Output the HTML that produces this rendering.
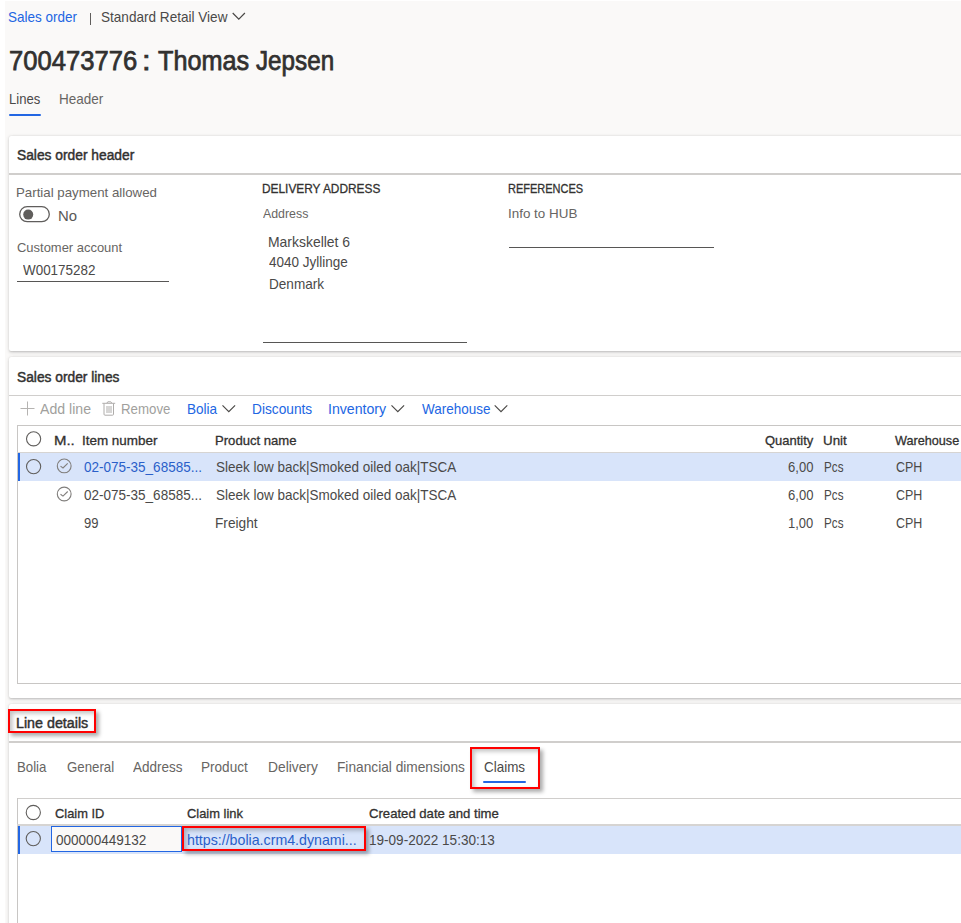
<!DOCTYPE html>
<html><head><meta charset="utf-8"><title>Sales order</title>
<style>
html,body{margin:0;padding:0;background:#fff;}
body{width:961px;height:923px;overflow:hidden;position:relative;font-family:"Liberation Sans",sans-serif;}
.t{position:absolute;white-space:nowrap;transform-origin:0 0;}
</style></head><body>
<div style="position:absolute;left:5px;top:1px;width:956px;height:922px;background:#faf9f8;"></div><div style="position:absolute;left:9px;top:136px;width:970px;height:215px;background:#fff;border-radius:2px;box-shadow:0 1.6px 3.6px rgba(0,0,0,.11),0 0.3px 1.5px rgba(0,0,0,.10),0 0 4px rgba(0,0,0,.05);"></div><div style="position:absolute;left:9px;top:357px;width:970px;height:340.5px;background:#fff;border-radius:2px;box-shadow:0 1.6px 3.6px rgba(0,0,0,.11),0 0.3px 1.5px rgba(0,0,0,.10),0 0 4px rgba(0,0,0,.05);"></div><div style="position:absolute;left:9px;top:704px;width:970px;height:260px;background:#fff;border-radius:2px;box-shadow:0 1.6px 3.6px rgba(0,0,0,.11),0 0.3px 1.5px rgba(0,0,0,.10),0 0 4px rgba(0,0,0,.05);"></div><div style="position:absolute;left:9px;top:173.2px;width:953px;height:1.5px;background:#d0cecc;"></div><div style="position:absolute;left:9px;top:394.6px;width:953px;height:1.5px;background:#d0cecc;"></div><div style="position:absolute;left:9px;top:741.0px;width:953px;height:1.5px;background:#d0cecc;"></div><div style="position:absolute;left:90px;top:13px;width:1px;height:12px;background:#605e5c;"></div><div style="position:absolute;left:9px;top:113.5px;width:32px;height:2px;background:#2266e3;border-radius:1px;"></div><div style="position:absolute;left:17px;top:281px;width:152px;height:1px;background:#575655;"></div><div style="position:absolute;left:263px;top:342px;width:204px;height:1px;background:#575655;"></div><div style="position:absolute;left:509px;top:247px;width:205px;height:1px;background:#575655;"></div><div style="position:absolute;left:17px;top:425px;width:944px;height:1px;background:#c8c6c4;"></div><div style="position:absolute;left:17px;top:425px;width:1px;height:258px;background:#c8c6c4;"></div><div style="position:absolute;left:17px;top:683px;width:944px;height:1px;background:#c8c6c4;"></div><div style="position:absolute;left:18px;top:453px;width:943px;height:28px;background:#d8e4fa;"></div><div style="position:absolute;left:17px;top:451.9px;width:944px;height:1.2px;background:#d6d4d2;"></div><div style="position:absolute;left:18px;top:453px;width:2px;height:28px;background:#2266e3;"></div><div style="position:absolute;left:8.2px;top:709.3px;width:87.8px;height:23.4px;border:2.8px solid #ff0000;box-sizing:border-box;box-shadow:3px 3px 4px rgba(0,0,0,.33), inset 2.5px 2.5px 4px rgba(0,0,0,.24);"></div><div style="position:absolute;left:483px;top:781px;width:43px;height:2px;background:#2266e3;border-radius:1px;"></div><div style="position:absolute;left:470.2px;top:747px;width:70px;height:42px;border:2.8px solid #ff0000;box-sizing:border-box;box-shadow:3px 3px 4px rgba(0,0,0,.33), inset 2.5px 2.5px 4px rgba(0,0,0,.24);"></div><div style="position:absolute;left:17px;top:797.6px;width:944px;height:1.1px;background:#d0cecc;"></div><div style="position:absolute;left:17px;top:797.5px;width:1px;height:130px;background:#c8c6c4;"></div><div style="position:absolute;left:18px;top:825.6px;width:943px;height:28.2px;background:#d8e4fa;"></div><div style="position:absolute;left:17px;top:824.4px;width:944px;height:1.2px;background:#d6d4d2;"></div><div style="position:absolute;left:18px;top:825.6px;width:2px;height:28.2px;background:#2266e3;"></div><div style="position:absolute;left:50.8px;top:825.8px;width:131.2px;height:26.2px;background:#faf9f8;border:1.2px solid #2266e3;box-sizing:border-box;"></div><div style="position:absolute;left:182px;top:825.5px;width:184px;height:25.75px;border:2.8px solid #ff0000;box-sizing:border-box;box-shadow:3px 3px 4px rgba(0,0,0,.33), inset 2.5px 2.5px 4px rgba(0,0,0,.24);"></div>
<svg style="position:absolute;left:0;top:0" width="961" height="923" viewBox="0 0 961 923"><polyline points="232.7,13 238.8,19.1 244.9,13" fill="none" stroke="#4a4846" stroke-width="1.2"/><rect x="19.7" y="206.7" width="29.6" height="15" rx="7.5" fill="none" stroke="#605e5c" stroke-width="1.3"/><circle cx="28.2" cy="214.6" r="5" fill="#605e5c"/><line x1="20.5" y1="408.5" x2="34.5" y2="408.5" stroke="#b5b3b1" stroke-width="1"/><line x1="27.5" y1="401.5" x2="27.5" y2="415.5" stroke="#b5b3b1" stroke-width="1"/><g fill="none" stroke="#aeacaa" stroke-width="1"><path d="M106.8 403.2 L107.8 401.8 H110.8 L111.8 403.2"/><line x1="102.3" y1="403.3" x2="115.2" y2="403.3"/><path d="M104 403.5 V414.2 Q104 415.2 105 415.2 H112.5 Q113.5 415.2 113.5 414.2 V403.5"/><line x1="107" y1="406" x2="107" y2="413"/><line x1="109" y1="406" x2="109" y2="413"/><line x1="111" y1="406" x2="111" y2="413"/></g><polyline points="222.5,405.4 228.79999999999998,411.6 235.1,405.4" fill="none" stroke="#4a4846" stroke-width="1.15"/><polyline points="391.5,405.4 397.8,411.6 404.09999999999997,405.4" fill="none" stroke="#4a4846" stroke-width="1.15"/><polyline points="494.7,405.4 501.0,411.6 507.29999999999995,405.4" fill="none" stroke="#4a4846" stroke-width="1.15"/><circle cx="33.6" cy="438.8" r="7.1" fill="none" stroke="#605e5c" stroke-width="1.1"/><circle cx="33.6" cy="466.6" r="7.1" fill="none" stroke="#605e5c" stroke-width="1.1"/><circle cx="64.2" cy="465.9" r="6.9" fill="none" stroke="#807e7c" stroke-width="1.1"/><polyline points="60.5,466.09999999999997 63,468.0 67.7,463.4" fill="none" stroke="#807e7c" stroke-width="1.1"/><circle cx="64.2" cy="494.0" r="6.9" fill="none" stroke="#807e7c" stroke-width="1.1"/><polyline points="60.5,494.2 63,496.1 67.7,491.5" fill="none" stroke="#807e7c" stroke-width="1.1"/><circle cx="33.3" cy="812.5" r="7.1" fill="none" stroke="#605e5c" stroke-width="1.1"/><circle cx="33.3" cy="838.6" r="7.1" fill="none" stroke="#605e5c" stroke-width="1.1"/></svg>
<div class="t" style="left:8.40px;top:9px;font-size:15px;line-height:15px;color:#2266e3;letter-spacing:-0.000px;transform:scaleX(0.8995);">Sales order</div>
<div class="t" style="left:101.00px;top:9px;font-size:15px;line-height:15px;color:#4a4948;letter-spacing:-0.000px;transform:scaleX(0.9045);">Standard Retail View</div>
<div class="t" style="left:8.75px;top:48px;font-size:27px;line-height:27px;color:#323130;letter-spacing:-0.000px;transform:scaleX(0.9480);-webkit-text-stroke-width:0.75px;">700473776</div>
<div class="t" style="left:142.20px;top:48px;font-size:27px;line-height:27px;color:#323130;letter-spacing:0.000px;transform:scaleX(1.1500);-webkit-text-stroke-width:0.75px;">:</div>
<div class="t" style="left:157.60px;top:48px;font-size:27px;line-height:27px;color:#323130;letter-spacing:-0.000px;transform:scaleX(0.9337);-webkit-text-stroke-width:0.75px;">Thomas</div>
<div class="t" style="left:256.40px;top:48px;font-size:27px;line-height:27px;color:#323130;letter-spacing:-0.000px;transform:scaleX(0.8972);-webkit-text-stroke-width:0.75px;">Jepsen</div>
<div class="t" style="left:9.33px;top:91px;font-size:15px;line-height:15px;color:#4a4948;letter-spacing:-0.000px;transform:scaleX(0.8731);">Lines</div>
<div class="t" style="left:59.30px;top:91px;font-size:15px;line-height:15px;color:#676563;letter-spacing:-0.000px;transform:scaleX(0.9004);">Header</div>
<div class="t" style="left:16.80px;top:148px;font-size:14px;line-height:14px;color:#323130;letter-spacing:-0.000px;transform:scaleX(0.9848);-webkit-text-stroke-width:0.45px;">Sales order header</div>
<div class="t" style="left:15.78px;top:186px;font-size:13px;line-height:13px;color:#676563;letter-spacing:0.000px;transform:scaleX(1.0213);">Partial payment allowed</div>
<div class="t" style="left:57.51px;top:208px;font-size:15px;line-height:15px;color:#5a5856;letter-spacing:-0.000px;transform:scaleX(0.9926);">No</div>
<div class="t" style="left:16.80px;top:241px;font-size:13px;line-height:13px;color:#676563;letter-spacing:-0.000px;transform:scaleX(0.9964);">Customer account</div>
<div class="t" style="left:22.70px;top:262px;font-size:15px;line-height:15px;color:#4a4948;letter-spacing:-0.000px;transform:scaleX(0.8951);">W00175282</div>
<div class="t" style="left:261.79px;top:182px;font-size:13px;line-height:13px;color:#323130;letter-spacing:-0.000px;transform:scaleX(0.9133);-webkit-text-stroke-width:0.3px;">DELIVERY ADDRESS</div>
<div class="t" style="left:262.70px;top:207px;font-size:13px;line-height:13px;color:#676563;letter-spacing:-0.000px;transform:scaleX(0.9504);">Address</div>
<div class="t" style="left:268.47px;top:234px;font-size:15px;line-height:15px;color:#4a4948;letter-spacing:-0.000px;transform:scaleX(0.9286);">Markskellet 6</div>
<div class="t" style="left:268.50px;top:254px;font-size:15px;line-height:15px;color:#4a4948;letter-spacing:-0.000px;transform:scaleX(0.9000);">4040 Jyllinge</div>
<div class="t" style="left:268.50px;top:276px;font-size:15px;line-height:15px;color:#4a4948;letter-spacing:-0.000px;transform:scaleX(0.9047);">Denmark</div>
<div class="t" style="left:508.15px;top:182px;font-size:13px;line-height:13px;color:#323130;letter-spacing:-0.000px;transform:scaleX(0.8460);-webkit-text-stroke-width:0.3px;">REFERENCES</div>
<div class="t" style="left:508.17px;top:207px;font-size:13px;line-height:13px;color:#676563;letter-spacing:0.000px;transform:scaleX(1.0317);">Info to HUB</div>
<div class="t" style="left:16.80px;top:370px;font-size:14px;line-height:14px;color:#323130;letter-spacing:-0.000px;transform:scaleX(0.9830);-webkit-text-stroke-width:0.45px;">Sales order lines</div>
<div class="t" style="left:39.50px;top:401px;font-size:15px;line-height:15px;color:#a19f9d;letter-spacing:-0.000px;transform:scaleX(0.9413);">Add line</div>
<div class="t" style="left:120.72px;top:401px;font-size:15px;line-height:15px;color:#a19f9d;letter-spacing:-0.000px;transform:scaleX(0.8842);">Remove</div>
<div class="t" style="left:187.30px;top:401px;font-size:15px;line-height:15px;color:#2266e3;letter-spacing:-0.000px;transform:scaleX(0.9027);">Bolia</div>
<div class="t" style="left:251.79px;top:401px;font-size:15px;line-height:15px;color:#2266e3;letter-spacing:-0.000px;transform:scaleX(0.9136);">Discounts</div>
<div class="t" style="left:328.26px;top:401px;font-size:15px;line-height:15px;color:#2266e3;letter-spacing:-0.000px;transform:scaleX(0.9412);">Inventory</div>
<div class="t" style="left:421.70px;top:401px;font-size:15px;line-height:15px;color:#2266e3;letter-spacing:-0.000px;transform:scaleX(0.8983);">Warehouse</div>
<div class="t" style="left:53.75px;top:434px;font-size:13px;line-height:13px;color:#323130;letter-spacing:0.000px;transform:scaleX(1.1496);-webkit-text-stroke-width:0.3px;">M..</div>
<div class="t" style="left:81.97px;top:434px;font-size:13px;line-height:13px;color:#323130;letter-spacing:0.000px;transform:scaleX(1.0338);-webkit-text-stroke-width:0.3px;">Item number</div>
<div class="t" style="left:214.89px;top:434px;font-size:13px;line-height:13px;color:#323130;letter-spacing:0.000px;transform:scaleX(1.0075);-webkit-text-stroke-width:0.3px;">Product name</div>
<div class="t" style="left:765.00px;top:434px;font-size:13px;line-height:13px;color:#323130;letter-spacing:-0.000px;transform:scaleX(0.9977);-webkit-text-stroke-width:0.3px;">Quantity</div>
<div class="t" style="left:822.67px;top:434px;font-size:13px;line-height:13px;color:#323130;letter-spacing:0.000px;transform:scaleX(1.0264);-webkit-text-stroke-width:0.3px;">Unit</div>
<div class="t" style="left:895.00px;top:434px;font-size:13px;line-height:13px;color:#323130;letter-spacing:-0.000px;transform:scaleX(0.9731);-webkit-text-stroke-width:0.3px;">Warehouse</div>
<div class="t" style="left:83.90px;top:459px;font-size:15px;line-height:15px;color:#2a5fc9;letter-spacing:-0.000px;transform:scaleX(0.9008);">02-075-35_68585...</div>
<div class="t" style="left:216.40px;top:459px;font-size:15px;line-height:15px;color:#4a4948;letter-spacing:-0.000px;transform:scaleX(0.8994);">Sleek low back|Smoked oiled oak|TSCA</div>
<div class="t" style="left:788.20px;top:459px;font-size:15px;line-height:15px;color:#4a4948;letter-spacing:-0.000px;transform:scaleX(0.8700);">6,00</div>
<div class="t" style="left:824.22px;top:459px;font-size:15px;line-height:15px;color:#4a4948;letter-spacing:-0.000px;transform:scaleX(0.7786);">Pcs</div>
<div class="t" style="left:895.70px;top:459px;font-size:15px;line-height:15px;color:#4a4948;letter-spacing:-0.000px;transform:scaleX(0.8302);">CPH</div>
<div class="t" style="left:83.90px;top:487px;font-size:15px;line-height:15px;color:#4a4948;letter-spacing:-0.000px;transform:scaleX(0.9008);">02-075-35_68585...</div>
<div class="t" style="left:216.40px;top:487px;font-size:15px;line-height:15px;color:#4a4948;letter-spacing:-0.000px;transform:scaleX(0.8994);">Sleek low back|Smoked oiled oak|TSCA</div>
<div class="t" style="left:788.20px;top:487px;font-size:15px;line-height:15px;color:#4a4948;letter-spacing:-0.000px;transform:scaleX(0.8700);">6,00</div>
<div class="t" style="left:824.22px;top:487px;font-size:15px;line-height:15px;color:#4a4948;letter-spacing:-0.000px;transform:scaleX(0.7786);">Pcs</div>
<div class="t" style="left:895.70px;top:487px;font-size:15px;line-height:15px;color:#4a4948;letter-spacing:-0.000px;transform:scaleX(0.8302);">CPH</div>
<div class="t" style="left:83.90px;top:515px;font-size:15px;line-height:15px;color:#4a4948;letter-spacing:-0.000px;transform:scaleX(0.8689);">99</div>
<div class="t" style="left:215.49px;top:515px;font-size:15px;line-height:15px;color:#4a4948;letter-spacing:-0.000px;transform:scaleX(0.9115);">Freight</div>
<div class="t" style="left:788.33px;top:515px;font-size:15px;line-height:15px;color:#4a4948;letter-spacing:-0.000px;transform:scaleX(0.8653);">1,00</div>
<div class="t" style="left:824.22px;top:515px;font-size:15px;line-height:15px;color:#4a4948;letter-spacing:-0.000px;transform:scaleX(0.7786);">Pcs</div>
<div class="t" style="left:895.70px;top:515px;font-size:15px;line-height:15px;color:#4a4948;letter-spacing:-0.000px;transform:scaleX(0.8302);">CPH</div>
<div class="t" style="left:15.78px;top:716px;font-size:14px;line-height:14px;color:#323130;letter-spacing:0.000px;transform:scaleX(1.0197);-webkit-text-stroke-width:0.45px;">Line details</div>
<div class="t" style="left:17.32px;top:759px;font-size:15px;line-height:15px;color:#676563;letter-spacing:-0.000px;transform:scaleX(0.8815);">Bolia</div>
<div class="t" style="left:66.70px;top:759px;font-size:15px;line-height:15px;color:#676563;letter-spacing:-0.000px;transform:scaleX(0.8844);">General</div>
<div class="t" style="left:133.20px;top:759px;font-size:15px;line-height:15px;color:#676563;letter-spacing:-0.000px;transform:scaleX(0.9005);">Address</div>
<div class="t" style="left:201.30px;top:759px;font-size:15px;line-height:15px;color:#676563;letter-spacing:-0.000px;transform:scaleX(0.9044);">Product</div>
<div class="t" style="left:267.98px;top:759px;font-size:15px;line-height:15px;color:#676563;letter-spacing:-0.000px;transform:scaleX(0.9203);">Delivery</div>
<div class="t" style="left:337.29px;top:759px;font-size:15px;line-height:15px;color:#676563;letter-spacing:-0.000px;transform:scaleX(0.9136);">Financial dimensions</div>
<div class="t" style="left:484.20px;top:759px;font-size:15px;line-height:15px;color:#4a4948;letter-spacing:-0.000px;transform:scaleX(0.8956);">Claims</div>
<div class="t" style="left:54.70px;top:807px;font-size:13px;line-height:13px;color:#323130;letter-spacing:-0.000px;transform:scaleX(0.9889);-webkit-text-stroke-width:0.3px;">Claim ID</div>
<div class="t" style="left:187.20px;top:807px;font-size:13px;line-height:13px;color:#323130;letter-spacing:-0.000px;transform:scaleX(0.9922);-webkit-text-stroke-width:0.3px;">Claim link</div>
<div class="t" style="left:368.70px;top:807px;font-size:13px;line-height:13px;color:#323130;letter-spacing:0.000px;transform:scaleX(1.0093);-webkit-text-stroke-width:0.3px;">Created date and time</div>
<div class="t" style="left:55.80px;top:832px;font-size:15px;line-height:15px;color:#4a4948;letter-spacing:-0.000px;transform:scaleX(0.9021);">000000449132</div>
<div class="t" style="left:187.25px;top:832px;font-size:15px;line-height:15px;color:#2a5fc9;letter-spacing:-0.000px;transform:scaleX(0.9465);">https://bolia.crm4.dynami...</div>
<div class="t" style="left:369.30px;top:832px;font-size:15px;line-height:15px;color:#4a4948;letter-spacing:-0.000px;transform:scaleX(0.9033);">19-09-2022 15:30:13</div>
</body></html>
